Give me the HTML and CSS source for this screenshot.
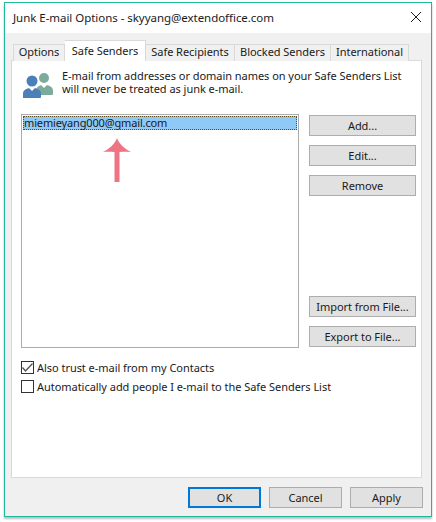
FILE: index.html
```html
<!DOCTYPE html>
<html lang="en">
<head>
  <meta charset="utf-8">
  <title>Junk E-mail Options</title>
  <link rel="stylesheet" href="styles.css">
</head>
<body>
  <div class="window">
    <div class="titlebar">
      <span class="title">Junk E-mail Options - skyyang@extendoffice.com</span>
      <svg class="close" width="12" height="12" viewBox="0 0 12 12"><path d="M1 1L11 11M11 1L1 11" stroke="#222" stroke-width="1" fill="none"/></svg>
    </div>
    <div class="body">
      <div class="tabs">
        <div class="tab tab-options">Options</div>
        <div class="tab tab-active">Safe Senders</div>
        <div class="tab tab-recipients">Safe Recipients</div>
        <div class="tab tab-blocked">Blocked Senders</div>
        <div class="tab tab-intl">International</div>
      </div>
      <div class="panel">
        <div class="intro">
          <svg class="people" width="32" height="28" viewBox="0 0 32 28">
            <circle cx="22" cy="7" r="5" fill="#7dab9b"/>
            <path d="M14 24V20C14 16 17 15 19 14L22 17L25 14C28 15 31 16 31 20V23C31 24 30 24 29 24Z" fill="#7dab9b"/>
            <circle cx="10" cy="10" r="5.5" fill="#4a7fb8"/>
            <path d="M1 27V23C1 19 4 18 7 17L10 20L13 17C16 18 19 19 19 23V26C19 27 18 27 17 27Z" fill="#4a7fb8"/>
          </svg>
          <p class="intro-text">E-mail from addresses or domain names on your Safe Senders List<br>will never be treated as junk e-mail.</p>
        </div>
        <div class="main">
          <div class="list">
            <div class="row-selected">miemieyang000@gmail.com</div>
            <svg class="arrow" width="30" height="44" viewBox="0 0 30 44"><path d="M15 0C17 6 23 11 29 14C25 13.500 21.500 13.500 17.500 14V44H12.500V14C8.500 13.500 5 13.500 1 14C7 11 13 6 15 0Z" fill="#ee7383"/></svg>
          </div>
          <div class="side">
            <div class="btn-group">
              <button class="btn">Add...</button>
              <button class="btn">Edit...</button>
              <button class="btn">Remove</button>
            </div>
            <div class="btn-group">
              <button class="btn">Import from File...</button>
              <button class="btn">Export to File...</button>
            </div>
          </div>
        </div>
        <div class="checks">
          <label class="check">
            <span class="box"><svg width="13" height="13" viewBox="0 0 13 13"><path d="M1.500 6.500L4.500 10L11.500 2.500" stroke="#555" stroke-width="1.300" fill="none"/></svg></span>
            Also trust e-mail from my Contacts
          </label>
          <label class="check">
            <span class="box"></span>
            Automatically add people I e-mail to the Safe Senders List
          </label>
        </div>
      </div>
      <div class="footer">
        <button class="btn btn-foot btn-default">OK</button>
        <button class="btn btn-foot">Cancel</button>
        <button class="btn btn-foot">Apply</button>
      </div>
    </div>
  </div>
</body>
</html>
```

FILE: styles.css
```css
* {
  box-sizing: border-box;
}

html, body {
  margin: 0;
  height: 100%;
  background: #ffffff;
}

body {
  padding: 2px 4px 5px 4px;
  font-family: "Noto Sans", sans-serif;
  font-size: 11px;
  letter-spacing: -0.04px;
  color: #1a1a1a;
}

.window {
  height: 515px;
  width: 428px;
  display: flex;
  flex-direction: column;
  border: 1px solid #1fb89c;
  box-shadow: 0 2px 2px #bdbdbd;
  background: #f0f0f0;
}

.titlebar {
  height: 30px;
  flex: none;
  display: flex;
  align-items: center;
  justify-content: space-between;
  padding: 0 9px 2px 8px;
  background: #ffffff;
}

.title {
  font-size: 11.500px;
}

.body {
  flex: 1;
  display: flex;
  flex-direction: column;
  padding: 7px 9px 0 6px;
}

.tabs {
  display: flex;
  align-items: flex-end;
  height: 21px;
  padding-left: 2px;
  margin-bottom: -1px;
  position: relative;
  z-index: 1;
}

.tab {
  height: 17px;
  padding-bottom: 3px;
  display: flex;
  align-items: center;
  justify-content: center;
  background: #f0f0f0;
  border: 1px solid #d9d9d9;
  border-bottom: none;
  border-left: none;
}

.tab-options {
  width: 52px;
  border-left: 1px solid #d9d9d9;
}

.tab-active {
  width: 81px;
  height: 21px;
  background: #ffffff;
  padding-bottom: 2px;
}

.tab-recipients {
  width: 89px;
}

.tab-blocked {
  width: 96px;
}

.tab-intl {
  width: 78px;
}

.panel {
  height: 418px;
  flex: none;
  background: #ffffff;
  border: 1px solid #d9d9d9;
  padding: 8px 5px 0 9px;
  display: flex;
  flex-direction: column;
}

.intro {
  display: flex;
  align-items: flex-start;
  height: 45px;
  gap: 8px;
  padding-left: 1px;
}

.people {
  margin-top: 2px;
}

.intro-text {
  margin: 0;
  line-height: 13px;
}

.main {
  display: flex;
  gap: 10px;
}

.list {
  width: 278px;
  height: 234px;
  border: 1px solid #ababab;
  padding: 1px;
  position: relative;
}

.row-selected {
  height: 14px;
  line-height: 13px;
  padding-left: 1px;
  letter-spacing: -0.15px;
  background: #90c8f6;
  outline: 1px dotted #5a4a20;
  outline-offset: -1px;
}

.arrow {
  position: absolute;
  left: 79.500px;
  top: 23px;
}

.side {
  width: 107px;
  height: 233px;
  padding-top: 1px;
  display: flex;
  flex-direction: column;
  justify-content: space-between;
}

.btn-group {
  display: flex;
  flex-direction: column;
  gap: 9px;
}

.btn {
  height: 21px;
  width: 100%;
  padding: 0;
  font: inherit;
  letter-spacing: inherit;
  color: inherit;
  background: #e1e1e1;
  border: 1px solid #adadad;
}

.checks {
  display: flex;
  flex-direction: column;
  gap: 6px;
  margin-top: 13px;
}

.check {
  display: flex;
  align-items: center;
  gap: 3px;
  height: 13px;
}

.box {
  width: 13px;
  height: 13px;
  flex: none;
  border: 1px solid #333333;
  background: #ffffff;
  display: flex;
}

.box svg {
  margin: -1px;
}

.footer {
  display: flex;
  justify-content: flex-end;
  gap: 8px;
  margin-top: 9px;
  margin-right: -1px;
}

.btn-foot {
  width: 73px;
}

.btn-default {
  border: 2px solid #0078d7;
}
```
